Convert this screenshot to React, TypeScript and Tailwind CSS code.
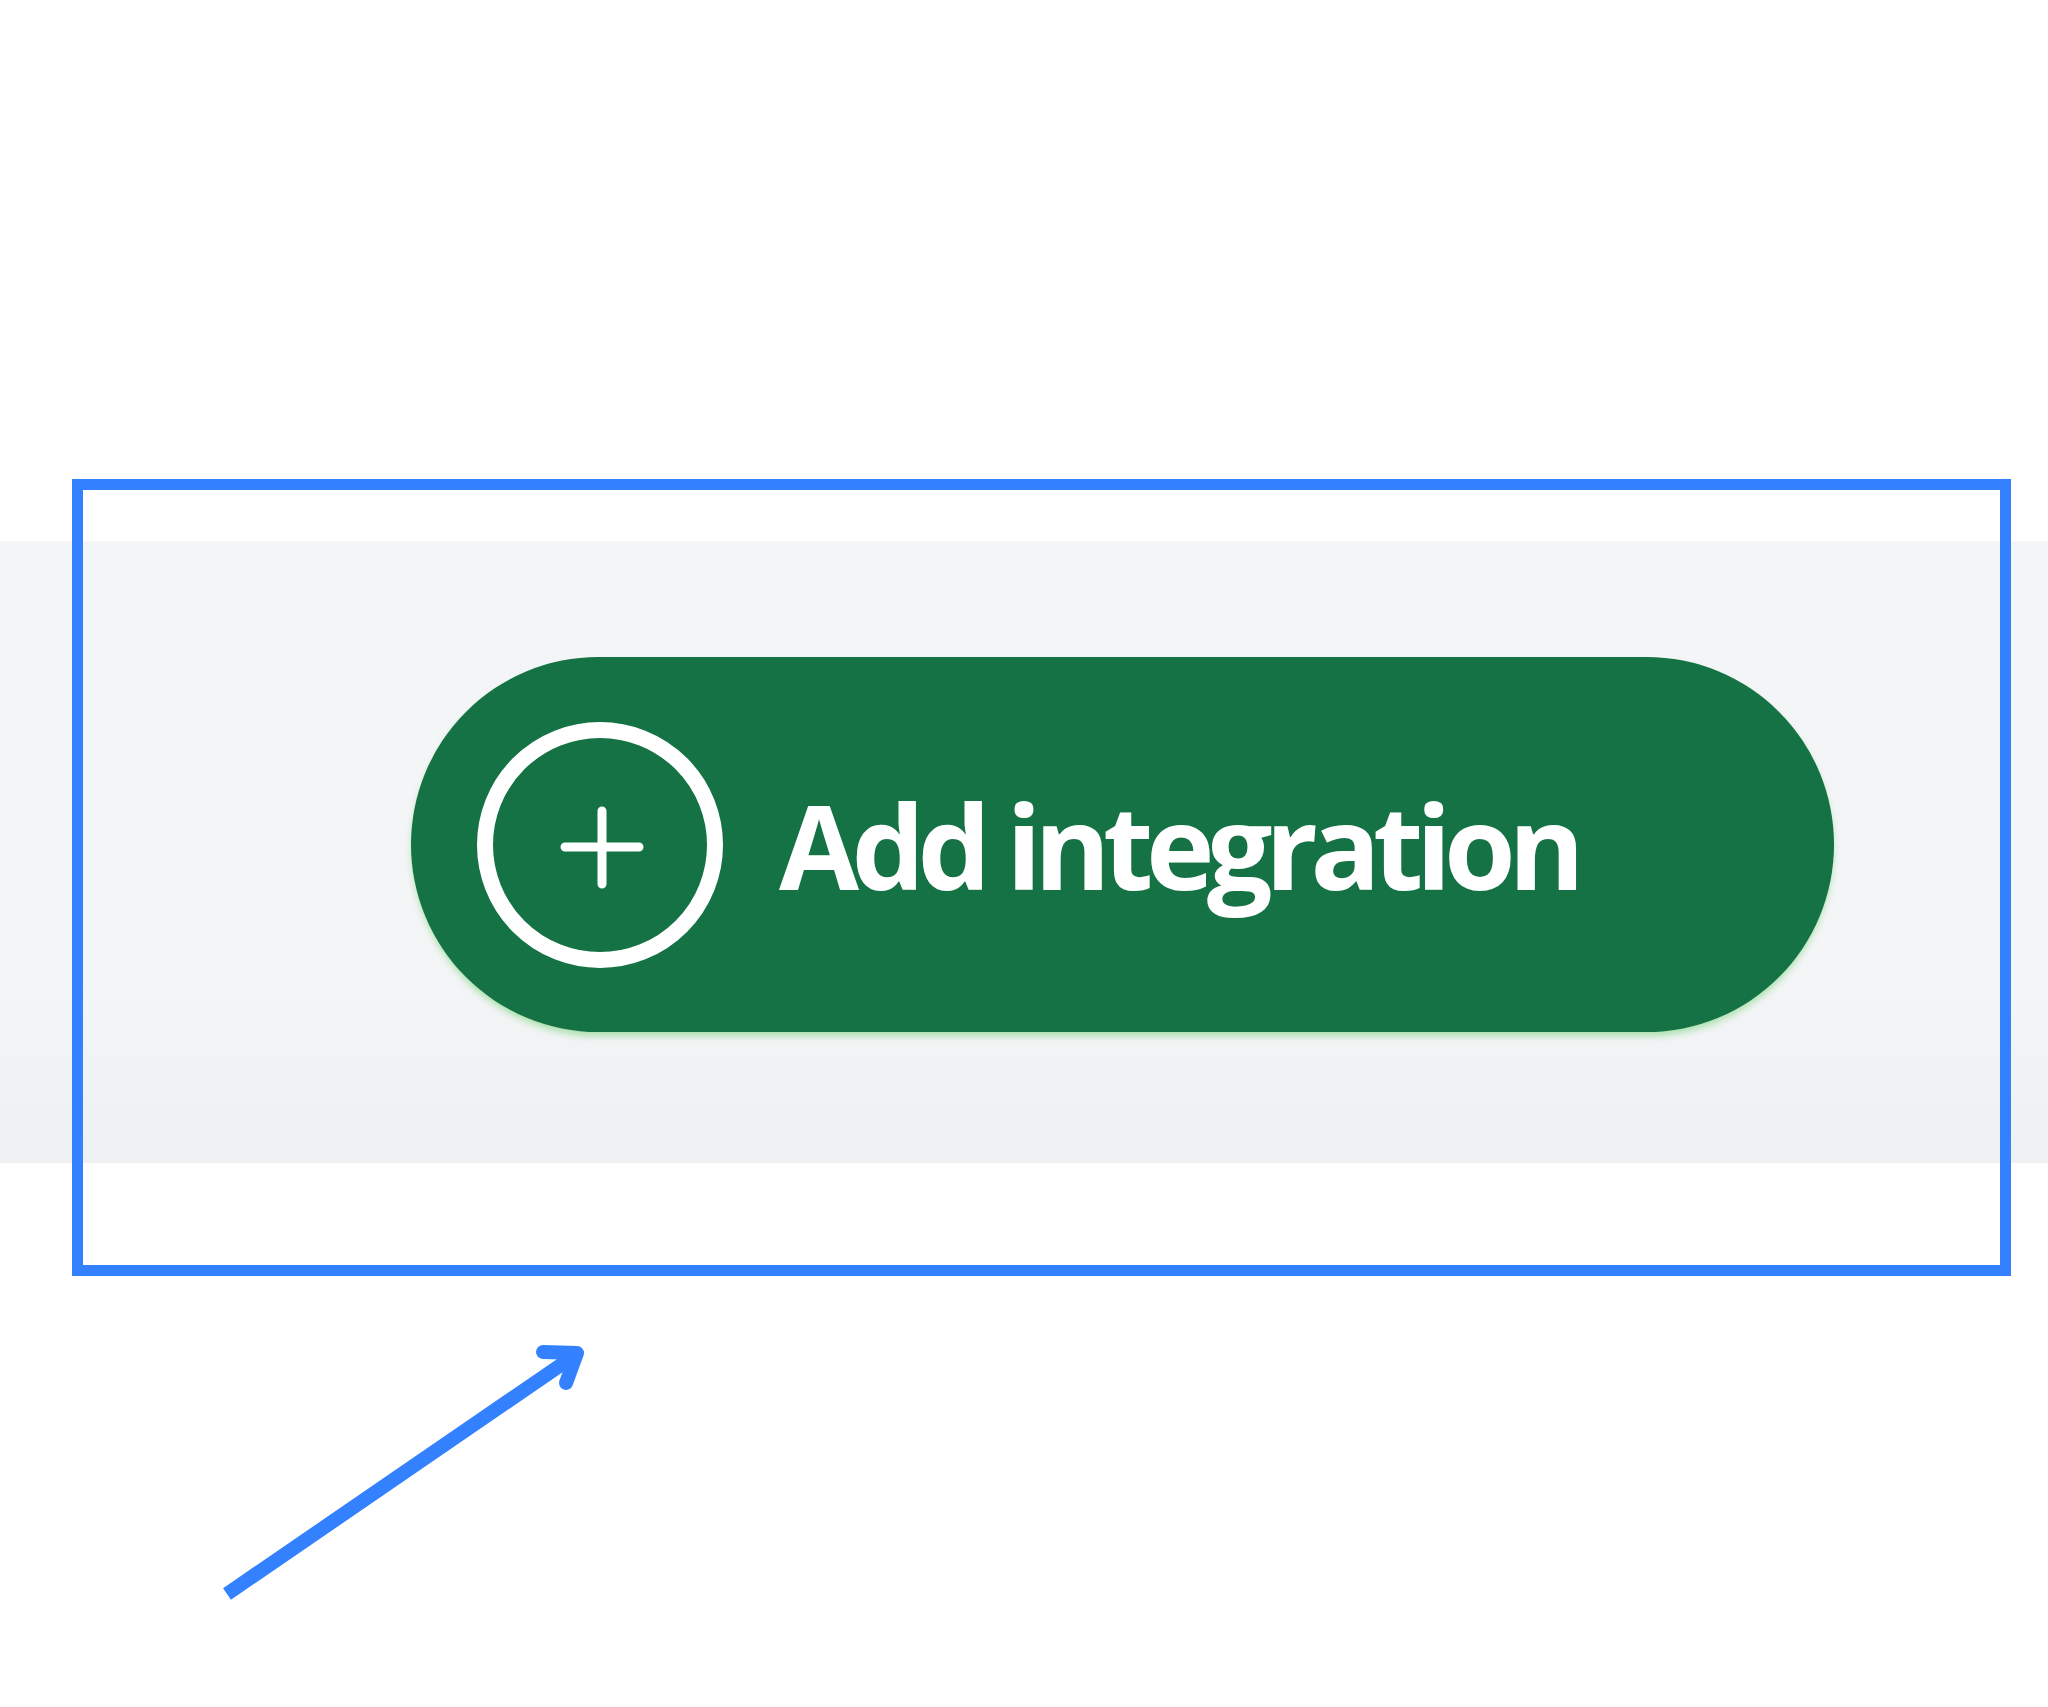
export default function App() {
  return (
    <div className="relative min-h-[1707px] bg-white" style={{ fontFamily: '"Open Sans", "Noto Sans", sans-serif' }}>
      <div className="pt-[541px]">
        <div className="flex bg-gradient-to-b from-[#f4f5f7] from-70% to-[#eff0f2] pt-[116px] pb-[131px] pl-[411px]">
          <button className="flex h-[375px] w-[1423px] items-center rounded-full bg-[#157244] pl-[66px] shadow-[0_5px_7px_-1px_rgba(110,210,110,0.55)]">
            <svg width="246" height="246" viewBox="0 0 246 246" fill="none" className="shrink-0">
              <circle cx="123" cy="123" r="115" stroke="white" strokeWidth="16" />
              <path d="M125 89v73M88 125h74" stroke="white" strokeWidth="9" strokeLinecap="round" />
            </svg>
            <span className="ml-[56px] text-[116px] font-bold leading-none tracking-[-0.064em] text-white">
              Add integration
            </span>
          </button>
        </div>
      </div>

      {/* annotation overlay */}
      <div className="pointer-events-none absolute left-[72px] top-[479px] h-[797px] w-[1939px] border-[11px] border-[#3381ff]" />
      <svg className="pointer-events-none absolute left-0 top-0" width="2048" height="1707" fill="none">
        <path d="M227 1594L571 1358" stroke="#3381ff" strokeWidth="14" />
        <path d="M543 1352L577 1353L566 1383" stroke="#3381ff" strokeWidth="14" strokeLinecap="round" strokeLinejoin="round" />
      </svg>
    </div>
  );
}
